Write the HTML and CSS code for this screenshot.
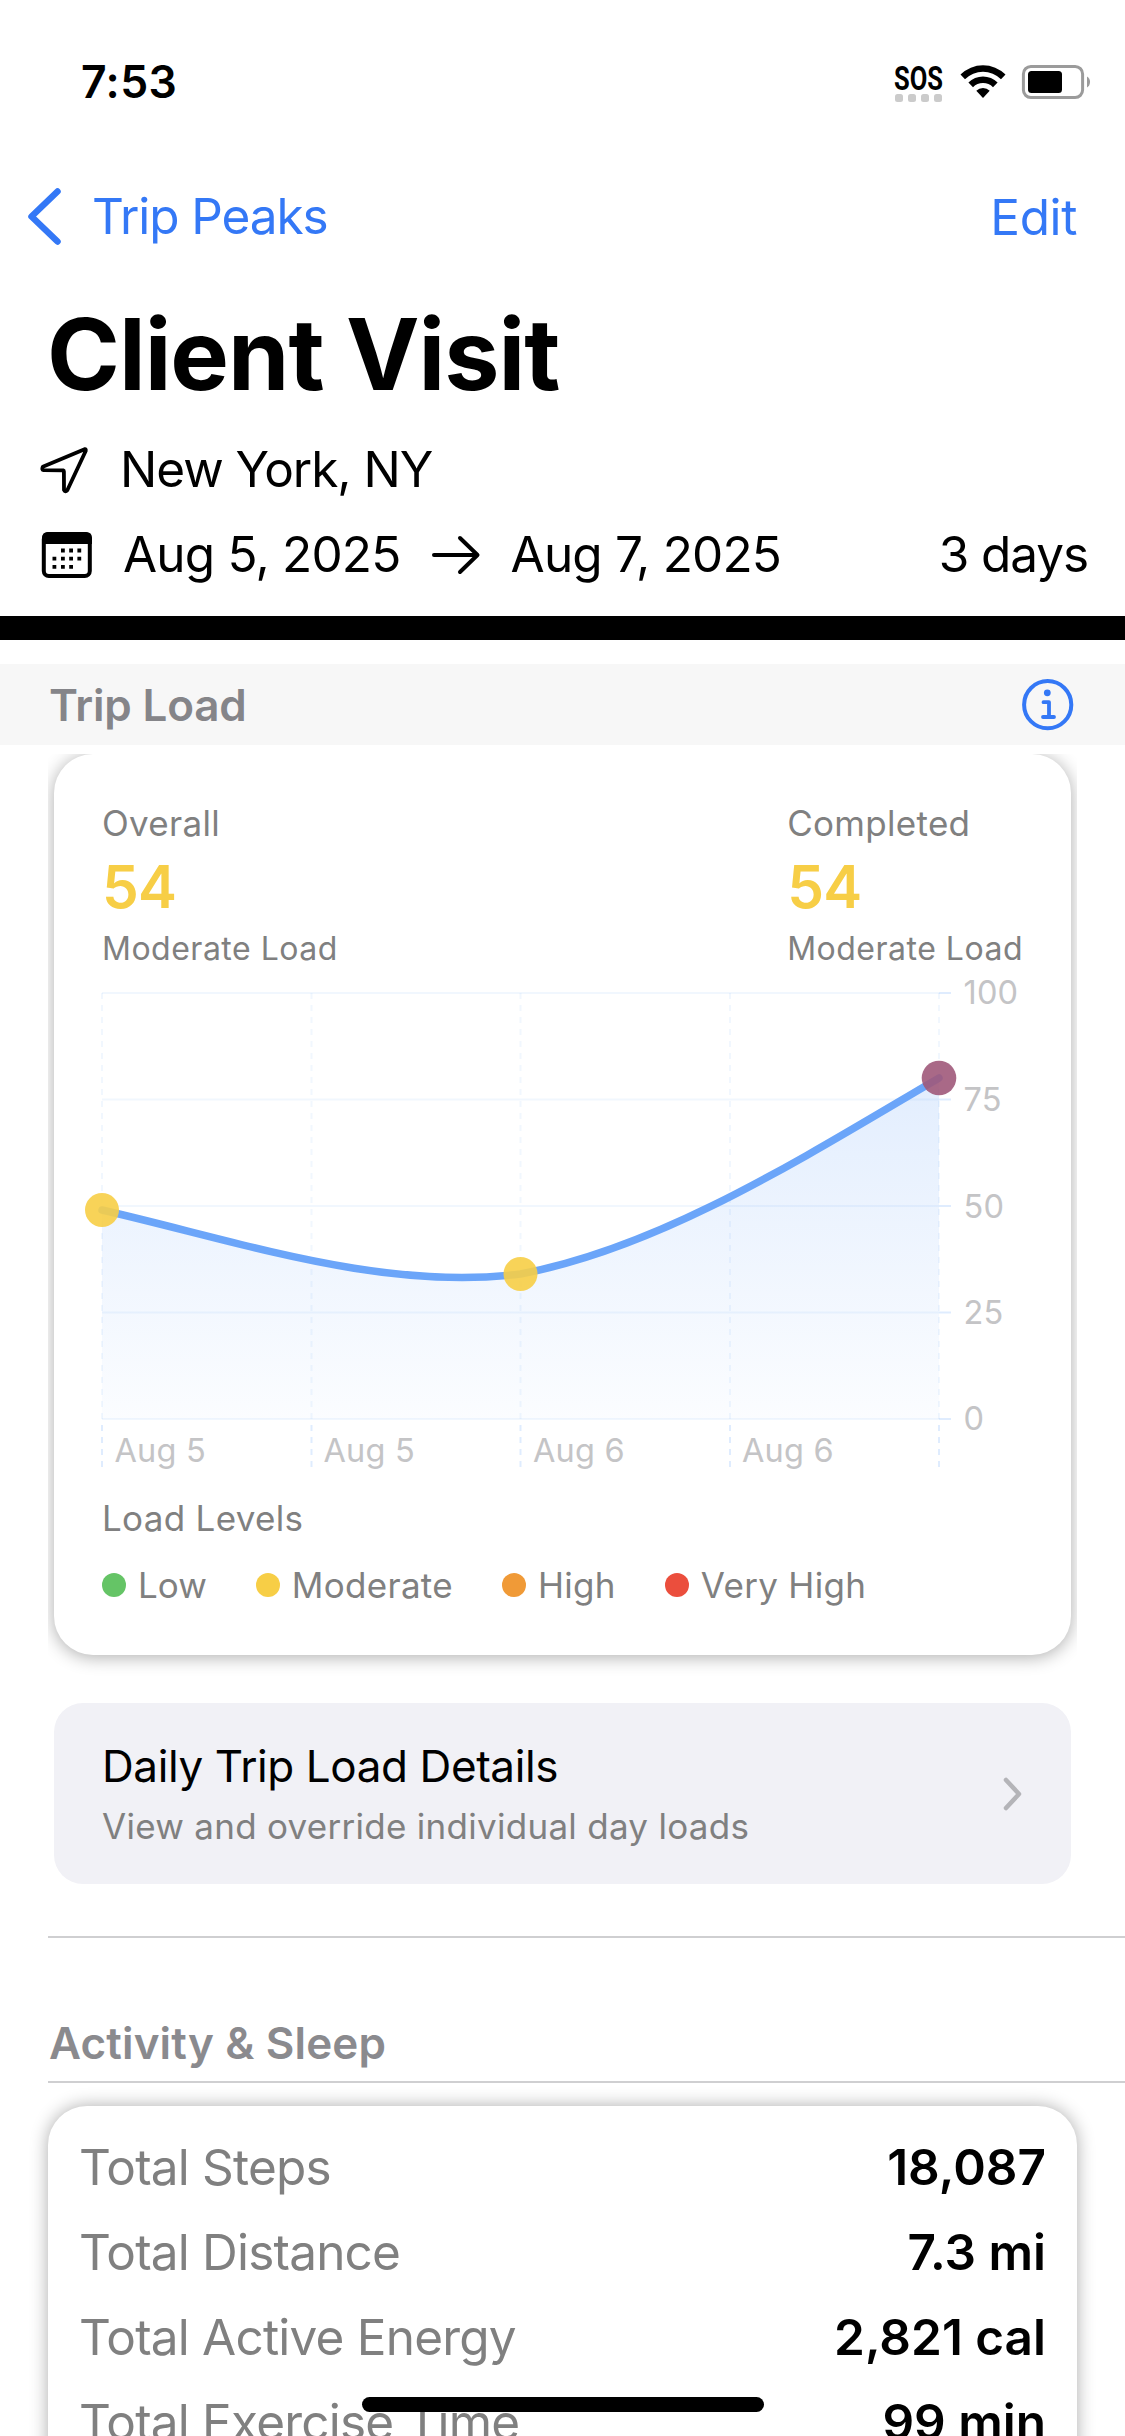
FILE: index.html
```html
<!DOCTYPE html>
<html lang="en">
<head>
    <meta charset="UTF-8">
    <meta name="viewport" content="width=device-width, initial-scale=1.0">
    <title>Client Visit</title>
    <link rel="stylesheet" href="styles.css">
</head>
<body>
    <div class="status-bar">
        <span class="time">7:53</span>
        <svg class="status-icons" width="200" height="50" viewBox="892 57 200 50">
            <text class="sos" x="894" y="89.5" textLength="49" lengthAdjust="spacingAndGlyphs">SOS</text>
            <g fill="#cbcbcb">
                <rect x="895" y="94" width="8" height="8" rx="2.5"/>
                <rect x="908" y="94" width="8" height="8" rx="2.5"/>
                <rect x="921" y="94" width="8" height="8" rx="2.5"/>
                <rect x="934" y="94" width="8" height="8" rx="2.5"/>
            </g>
            <path d="M960.5 74.5 A32 32 0 0 1 1005.5 74.5 L1001 79.2 A25.5 25.5 0 0 0 965 79.2 Z"/>
            <path d="M968.4 82.6 A20.5 20.5 0 0 1 997.6 82.6 L993 87.3 A14 14 0 0 0 973 87.3 Z"/>
            <path d="M976.3 90.8 A9.5 9.5 0 0 1 989.7 90.8 L983 98 Z"/>
            <rect x="1023.4" y="66.4" width="59.2" height="31.2" rx="7.5" fill="none" stroke="#9b9b9b" stroke-width="3"/>
            <rect x="1028" y="71" width="34" height="22" rx="3.5"/>
            <path d="M1087 76.5 A6.5 6.5 0 0 1 1087 87.5 Z" fill="#9b9b9b"/>
        </svg>
    </div>

    <nav class="nav">
        <a class="back" href="#">
            <svg width="34" height="58" viewBox="0 0 34 58"><path d="M30.500 3.500 L4.500 28.500 L30.500 53.500"/></svg>
            <span>Trip Peaks</span>
        </a>
        <a class="edit" href="#">Edit</a>
    </nav>

    <header class="trip">
        <h1>Client Visit</h1>
        <div class="trip-row">
            <svg class="icon" width="50" height="50" viewBox="40 444 50 50">
                <path d="M84.6 448.2 L42.8 465.8 Q41.5 468.8 43.5 469.2 L63.2 469.4 Q63.9 469.6 63.9 470.4 L64 489 Q65.2 491.6 67.3 489.3 L85.7 450 Q86.2 447.9 84.6 448.2 Z" fill="none" stroke="#000" stroke-width="3.8" stroke-linejoin="round"/>
            </svg>
            <span class="place">New York, NY</span>
        </div>
        <div class="trip-row">
            <svg class="icon" width="54" height="50" viewBox="40 529 54 50">
                <rect x="43.8" y="533" width="46" height="42" rx="5" fill="none" stroke="#000" stroke-width="4"/>
                <path d="M42 543 V537 Q42 531 48 531 H86 Q92 531 92 537 V543 Z"/>
                <path d="M61 549.5h3.8M69.2 549.5h3.8M77.4 549.5h3.8M52.5 557.7h3.8M61 557.7h3.8M69.2 557.7h3.8M77.4 557.7h3.8M52.5 565.8h3.8M61 565.8h3.8M69.2 565.8h3.8" stroke="#000" stroke-width="3.8"/>
            </svg>
            <span class="date">Aug 5, 2025</span>
            <svg class="arrow" width="50" height="42" viewBox="0 0 50 42">
                <path d="M3 21 H46 M29 4 L46.500 21 L29 38"/>
            </svg>
            <span class="date">Aug 7, 2025</span>
            <span class="days">3 days</span>
        </div>
    </header>

    <main>
        <div class="section-head">
            <h2>Trip Load</h2>
            <svg width="52" height="52" viewBox="0 0 52 52">
                <circle cx="25.700" cy="25.700" r="23.600" fill="none" stroke="#3478f6" stroke-width="4"/>
                <circle cx="25.300" cy="13.800" r="3.400" fill="#3478f6"/>
                <path d="M21.500 23.200 H27 V38 M21 38 H32" fill="none" stroke="#3478f6" stroke-width="3.8" stroke-linecap="round" stroke-linejoin="round"/>
            </svg>
        </div>

        <div class="load-clip">
            <section class="load-card">
                <div class="stats">
                    <div>
                        <p class="caption">Overall</p>
                        <p class="score">54</p>
                        <p class="level">Moderate Load</p>
                    </div>
                    <div>
                        <p class="caption">Completed</p>
                        <p class="score">54</p>
                        <p class="level">Moderate Load</p>
                    </div>
                </div>

                <svg class="chart" width="1017" height="523" viewBox="54 971 1017 523">
                    <defs>
                        <linearGradient id="area" x1="0" y1="0" x2="0" y2="1">
                            <stop offset="0" stop-color="#3a87f7" stop-opacity="0.145"/>
                            <stop offset="1" stop-color="#3a87f7" stop-opacity="0.02"/>
                        </linearGradient>
                    </defs>
                    <path d="M102 1210 C241.500 1242 381 1291 520.500 1274 C660 1248 799.500 1160 939 1078 V1419 H102 Z" fill="url(#area)"/>
                    <path class="grid" d="M102 993 H939 M102 1099.500 H939 M102 1206 H939 M102 1312.500 H939 M102 1419 H939"/>
                    <path class="grid dashed" d="M102 993 V1419 M311.500 993 V1419 M520.500 993 V1419 M730 993 V1419 M939 993 V1419"/>
                    <path class="tick" d="M939 993 H951 M939 1099.500 H951 M939 1206 H951 M939 1312.500 H951 M939 1419 H951"/>
                    <path class="tick dashed" d="M102 1425 V1467 M311.500 1425 V1467 M520.500 1425 V1467 M730 1425 V1467 M939 1425 V1467"/>
                    <path class="line" d="M102 1210 C241.500 1242 381 1291 520.500 1274 C660 1248 799.500 1160 939 1078"/>
                    <circle cx="102" cy="1210" r="17" fill="#f7ce46" fill-opacity="0.9"/>
                    <circle cx="520.500" cy="1274" r="17" fill="#f7ce46" fill-opacity="0.9"/>
                    <circle cx="939" cy="1078" r="17.300" fill="#a0597a" fill-opacity="0.9"/>
                    <g class="axis">
                        <text x="963.500" y="1004">100</text>
                        <text x="963.500" y="1111">75</text>
                        <text x="963.500" y="1217.500">50</text>
                        <text x="963.500" y="1324">25</text>
                        <text x="963.500" y="1430">0</text>
                        <text x="114.500" y="1461.500">Aug 5</text>
                        <text x="323.500" y="1461.500">Aug 5</text>
                        <text x="533" y="1461.500">Aug 6</text>
                        <text x="742" y="1461.500">Aug 6</text>
                    </g>
                </svg>

                <p class="caption legend-title">Load Levels</p>
                <ul class="legend">
                    <li class="low">Low</li>
                    <li class="moderate">Moderate</li>
                    <li class="high">High</li>
                    <li class="very-high">Very High</li>
                </ul>
            </section>
        </div>

        <a class="details" href="#">
            <div>
                <p class="details-title">Daily Trip Load Details</p>
                <p class="caption details-sub">View and override individual day loads</p>
            </div>
            <svg width="19" height="34" viewBox="0 0 19 34"><path d="M3 3 L16 17 L3 31"/></svg>
        </a>

        <div class="activity-head">
            <h2>Activity &amp; Sleep</h2>
        </div>

        <section class="activity-card">
            <div class="metric"><span>Total Steps</span><strong>18,087</strong></div>
            <div class="metric"><span>Total Distance</span><strong>7.3 mi</strong></div>
            <div class="metric"><span>Total Active Energy</span><strong>2,821 cal</strong></div>
            <div class="metric"><span>Total Exercise Time</span><strong>99 min</strong></div>
        </section>
    </main>

    <div class="home-indicator"></div>
</body>
</html>
```
FILE: styles.css
```css
* {
    box-sizing: border-box;
}
body {
    position: relative;
    width: 1125px;
    height: 2436px;
    margin: 0;
    overflow: hidden;
    background-color: #fff;
    color: #000;
    font-family: Inter, "Liberation Sans", sans-serif;
}
h1, h2, p, ul {
    margin: 0;
    padding: 0;
}
a {
    color: inherit;
    text-decoration: none;
}
svg {
    display: block;
    flex: none;
}
.status-bar {
    display: flex;
    align-items: center;
    justify-content: space-between;
    height: 164px;
    padding: 0 33px 0 81px;
}
.time {
    font-size: 44.5px;
    font-weight: 600;
    letter-spacing: 0.4px;
}
.sos {
    font-family: Roboto, sans-serif;
    font-size: 33px;
    font-weight: 700;
}
.nav {
    display: flex;
    align-items: center;
    justify-content: space-between;
    height: 105px;
    padding: 0 48px 0 27px;
    color: #3478f6;
    font-size: 49.5px;
}
.back {
    display: flex;
    align-items: center;
    gap: 31px;
    letter-spacing: -1.1px;
}
.back span {
    margin-top: -2px;
}
.back path {
    fill: none;
    stroke: #3478f6;
    stroke-width: 6.5;
    stroke-linecap: round;
    stroke-linejoin: round;
}
.edit {
    letter-spacing: -0.4px;
}
.trip {
    height: 371px;
    padding-top: 13px;
    border-bottom: 24px solid #000;
}
.trip h1 {
    padding-left: 47px;
    font-size: 98.6px;
    font-weight: 700;
    line-height: 145px;
    letter-spacing: -1px;
}
.trip-row {
    display: flex;
    align-items: center;
    height: 85px;
    padding: 0 37px 0 40px;
    font-size: 49.5px;
}
.trip-row span {
    margin-top: -2px;
}
.icon {
    margin-right: 29px;
}
.place {
    margin-left: 1px;
    letter-spacing: -1.05px;
}
.date {
    letter-spacing: -0.8px;
}
.arrow {
    margin: 0 30px;
}
.arrow path {
    fill: none;
    stroke: #000;
    stroke-width: 4;
    stroke-linecap: round;
    stroke-linejoin: round;
}
.trip-row .days {
    margin-left: auto;
    letter-spacing: -1.1px;
}
h2 {
    color: #8a8a8e;
    font-size: 44px;
    font-weight: 600;
}
.section-head {
    display: flex;
    align-items: center;
    justify-content: space-between;
    height: 81px;
    margin-top: 24px;
    padding: 0 51px 0 49px;
    background-color: #f7f7f7;
}
.section-head h2 {
    color: #858589;
    letter-spacing: -0.2px;
}
.load-clip {
    height: 949px;
    margin: 9px 48px 0;
    padding: 0 6px;
    overflow: hidden;
}
.load-card {
    height: 901px;
    padding-top: 45px;
    border-radius: 39px;
    background-color: #fff;
    box-shadow: 0 2px 18px rgba(0, 0, 0, 0.33);
}
.stats {
    display: flex;
    justify-content: space-between;
    padding: 0 48px;
}
.caption {
    color: #808080;
    font-size: 35px;
    line-height: 48px;
    letter-spacing: 0.3px;
}
.score {
    color: #f7ce46;
    font-size: 58.5px;
    font-weight: 600;
    line-height: 79px;
    letter-spacing: -0.8px;
}
.level {
    color: #808080;
    font-size: 32px;
    line-height: 45px;
    letter-spacing: 0.5px;
}
.chart .grid {
    fill: none;
    stroke: #3a87f7;
    stroke-opacity: 0.07;
    stroke-width: 2;
}
.chart .tick {
    fill: none;
    stroke: #3a87f7;
    stroke-opacity: 0.16;
    stroke-width: 2;
}
.chart .dashed {
    stroke-dasharray: 6 6;
}
.chart .line {
    fill: none;
    stroke: #6ba5f9;
    stroke-width: 7.5;
    stroke-linecap: round;
}
.axis {
    fill: #c4c4c6;
    font-size: 32.5px;
    letter-spacing: 0.2px;
}
.legend-title {
    padding-left: 48px;
}
.legend {
    display: flex;
    gap: 49px;
    margin-top: 19px;
    padding-left: 48px;
    list-style: none;
    color: #808080;
    font-size: 35px;
    line-height: 48px;
    letter-spacing: 0.3px;
}
.legend li {
    display: flex;
    align-items: center;
    gap: 12px;
}
.legend li::before {
    content: "";
    width: 24px;
    height: 24px;
    border-radius: 50%;
}
.legend .low {
    letter-spacing: 0;
}
.legend .low::before {
    background-color: #65c466;
}
.legend .moderate::before {
    background-color: #f7ce46;
}
.legend .high::before {
    background-color: #f09a37;
}
.legend .very-high::before {
    background-color: #eb4e3d;
}
.details {
    display: flex;
    align-items: center;
    justify-content: space-between;
    height: 181px;
    margin: 0 54px;
    padding: 0 49px 2px 48px;
    border-radius: 29px;
    background-color: #f1f1f6;
}
.details-title {
    font-size: 44px;
    line-height: 66px;
    letter-spacing: -0.4px;
}
.details-sub {
    line-height: 54px;
    letter-spacing: 0.28px;
}
.details svg {
    margin-top: 2px;
}
.details path {
    fill: none;
    stroke: #b4b4b8;
    stroke-width: 4.5;
    stroke-linecap: round;
    stroke-linejoin: round;
}
.activity-head {
    display: flex;
    align-items: flex-end;
    height: 147px;
    margin: 52px 0 0 48px;
    padding: 0 0 8px 1px;
    border-top: 2px solid #cfcfd1;
    border-bottom: 2px solid #cfcfd1;
}
.activity-head h2 {
    line-height: 60px;
    letter-spacing: 0.15px;
}
.activity-card {
    height: 400px;
    margin: 23px 48px 0;
    padding: 18px 31px 0;
    border-radius: 39px;
    background-color: #fff;
    box-shadow: 0 0 18px rgba(0, 0, 0, 0.33);
}
.metric {
    display: flex;
    align-items: center;
    justify-content: space-between;
    height: 85px;
    font-size: 49.5px;
}
.metric span {
    color: #808080;
    letter-spacing: -0.8px;
}
.metric strong {
    font-weight: 600;
}
.home-indicator {
    position: absolute;
    left: 362px;
    top: 2397px;
    width: 402px;
    height: 15px;
    border-radius: 8px;
    background-color: #000;
}
```
